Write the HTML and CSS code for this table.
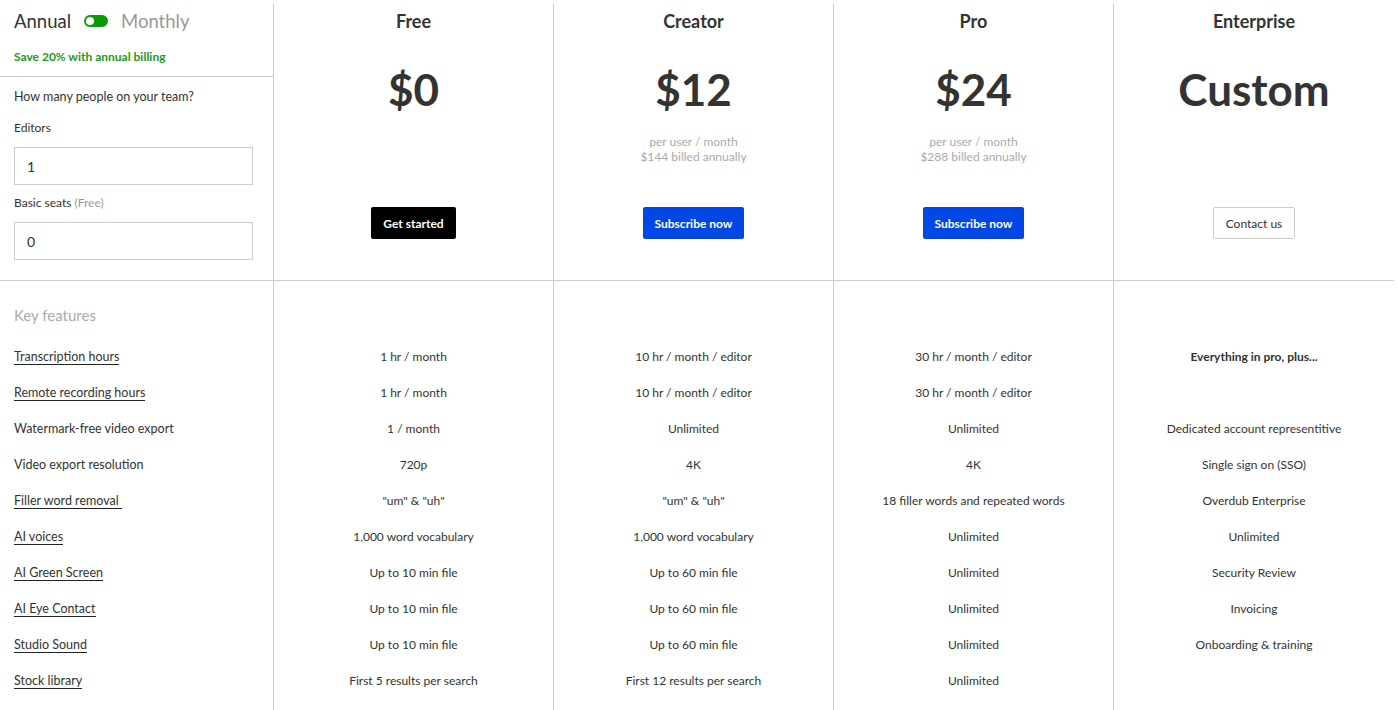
FILE: index.html
```html
<!DOCTYPE html>
<html lang="en">
<head>
<meta charset="utf-8">
<title>Pricing</title>
<link rel="stylesheet" href="styles.css">
</head>
<body>
<div class="pricing">
  <div class="cell head side">
    <div class="billing">
      <div class="toggle-row">
        <span class="opt on">Annual</span>
        <span class="switch"><span class="knob"></span></span>
        <span class="opt off">Monthly</span>
      </div>
      <div class="save">Save 20% with annual billing</div>
    </div>
    <div class="team">
      <div class="q">How many people on your team?</div>
      <label class="lbl lbl-editors">Editors</label>
      <input class="field" type="text" value="1">
      <label class="lbl lbl-basic">Basic seats <span class="muted">(Free)</span></label>
      <input class="field" type="text" value="0">
    </div>
  </div>
  <div class="cell head plan">
    <div class="plan-name">Free</div>
    <div class="price">$0</div>
    <div class="sub"></div>
    <a class="btn btn-dark">Get started</a>
  </div>
  <div class="cell head plan">
    <div class="plan-name">Creator</div>
    <div class="price">$12</div>
    <div class="sub">per user / month<br>$144 billed annually</div>
    <a class="btn btn-blue">Subscribe now</a>
  </div>
  <div class="cell head plan">
    <div class="plan-name">Pro</div>
    <div class="price">$24</div>
    <div class="sub">per user / month<br>$288 billed annually</div>
    <a class="btn btn-blue">Subscribe now</a>
  </div>
  <div class="cell head plan">
    <div class="plan-name">Enterprise</div>
    <div class="price">Custom</div>
    <div class="sub"></div>
    <a class="btn btn-light">Contact us</a>
  </div>

  <div class="cell key side">Key features</div>
  <div class="cell key"></div>
  <div class="cell key"></div>
  <div class="cell key"></div>
  <div class="cell key"></div>

  <div class="cell feat side"><span class="ul">Transcription hours</span></div>
  <div class="cell feat">1 hr / month</div>
  <div class="cell feat">10 hr / month / editor</div>
  <div class="cell feat">30 hr / month / editor</div>
  <div class="cell feat strong">Everything in pro, plus...</div>

  <div class="cell feat side"><span class="ul">Remote recording hours</span></div>
  <div class="cell feat">1 hr / month</div>
  <div class="cell feat">10 hr / month / editor</div>
  <div class="cell feat">30 hr / month / editor</div>
  <div class="cell feat"></div>

  <div class="cell feat side">Watermark-free video export</div>
  <div class="cell feat">1 / month</div>
  <div class="cell feat">Unlimited</div>
  <div class="cell feat">Unlimited</div>
  <div class="cell feat">Dedicated account representitive</div>

  <div class="cell feat side">Video export resolution</div>
  <div class="cell feat">720p</div>
  <div class="cell feat">4K</div>
  <div class="cell feat">4K</div>
  <div class="cell feat">Single sign on (SSO)</div>

  <div class="cell feat side"><span class="ul">Filler word removal&nbsp;</span></div>
  <div class="cell feat">"um" &amp; "uh"</div>
  <div class="cell feat">"um" &amp; "uh"</div>
  <div class="cell feat">18 filler words and repeated words</div>
  <div class="cell feat">Overdub Enterprise</div>

  <div class="cell feat side"><span class="ul">AI voices</span></div>
  <div class="cell feat">1,000 word vocabulary</div>
  <div class="cell feat">1,000 word vocabulary</div>
  <div class="cell feat">Unlimited</div>
  <div class="cell feat">Unlimited</div>

  <div class="cell feat side"><span class="ul">AI Green Screen</span></div>
  <div class="cell feat">Up to 10 min file</div>
  <div class="cell feat">Up to 60 min file</div>
  <div class="cell feat">Unlimited</div>
  <div class="cell feat">Security Review</div>

  <div class="cell feat side"><span class="ul">AI Eye Contact</span></div>
  <div class="cell feat">Up to 10 min file</div>
  <div class="cell feat">Up to 60 min file</div>
  <div class="cell feat">Unlimited</div>
  <div class="cell feat">Invoicing</div>

  <div class="cell feat side"><span class="ul">Studio Sound</span></div>
  <div class="cell feat">Up to 10 min file</div>
  <div class="cell feat">Up to 60 min file</div>
  <div class="cell feat">Unlimited</div>
  <div class="cell feat">Onboarding &amp; training</div>

  <div class="cell feat side"><span class="ul">Stock library</span></div>
  <div class="cell feat">First 5 results per search</div>
  <div class="cell feat">First 12 results per search</div>
  <div class="cell feat">Unlimited</div>
  <div class="cell feat"></div>

  <div class="cell end"></div>
  <div class="cell end"></div>
  <div class="cell end"></div>
  <div class="cell end"></div>
  <div class="cell end"></div>
</div>
</body>
</html>
```
FILE: styles.css
```css
* { box-sizing: border-box; }

html, body {
  margin: 0;
  padding: 0;
  background: #fff;
}

body {
  font-family: Lato, "Open Sans", sans-serif;
  color: #333;
  padding-top: 4px;
}

.pricing {
  width: 1394px;
  display: grid;
  grid-template-columns: 274px repeat(4, 280px);
}

.cell {
  border-right: 1px solid #ccc;
}
.cell:nth-child(5n) {
  border-right: none;
}

/* header row */
.head {
  height: 277px;
  border-bottom: 1px solid #ccc;
}

.billing {
  height: 73px;
  border-bottom: 1px solid #ccc;
  padding: 0 14px;
}

.toggle-row {
  height: 34px;
  display: flex;
  align-items: center;
  font-size: 18.5px;
}
.opt.on { color: #333; }
.opt.off { color: #999; }

.switch {
  width: 24px;
  height: 12px;
  border-radius: 6px;
  background: #0a9a0a;
  margin: 0 13px 0 13px;
  display: flex;
  align-items: center;
  padding-left: 2px;
}
.knob {
  width: 8px;
  height: 8px;
  border-radius: 50%;
  background: #fff;
}

.save {
  margin-top: 11px;
  font-size: 12px;
  line-height: 16px;
  color: #1c9a1c;
  font-weight: 700;
}

.team {
  padding: 12px 14px 0;
}
.q, .lbl {
  display: block;
  font-size: 12px;
  line-height: 16px;
  color: #333;
}
.q {
  font-size: 12.5px;
}
.lbl-editors { margin-top: 15px; }
.lbl-basic { margin-top: 10px; }
.muted { color: #999; }

.field {
  display: block;
  width: 239px;
  height: 38px;
  margin-top: 11px;
  border: 1px solid #ccc;
  border-radius: 0;
  padding: 0 12px;
  font-family: inherit;
  font-size: 14px;
  color: #333;
  background: #fff;
  outline: none;
}

.plan {
  display: flex;
  flex-direction: column;
  align-items: center;
  padding-top: 5px;
}
.plan-name {
  font-size: 18px;
  line-height: 24px;
  font-weight: 700;
  color: #333;
}
.price {
  margin-top: 28px;
  font-size: 44px;
  line-height: 56px;
  font-weight: 700;
  color: #333;
}
.sub {
  margin-top: 17px;
  height: 30px;
  font-size: 12px;
  line-height: 15px;
  color: #aaa;
  text-align: center;
}
.btn {
  margin-top: 43px;
  height: 32px;
  padding: 0 12px;
  display: inline-flex;
  align-items: center;
  justify-content: center;
  font-size: 12px;
  border-radius: 2px;
  cursor: pointer;
}
.btn-dark {
  background: #000;
  color: #fff;
  font-weight: 700;
}
.btn-blue {
  background: #0047e6;
  color: #fff;
  font-weight: 700;
}
.btn-light {
  background: #fff;
  color: #333;
  border: 1px solid #ccc;
}

/* features */
.key {
  height: 58px;
  padding-top: 16px;
}
.key.side {
  font-size: 15px;
  line-height: 36px;
  color: #aaa;
  padding-left: 14px;
}

.feat {
  height: 36px;
  line-height: 36px;
  font-size: 12px;
  color: #333;
  text-align: center;
  white-space: nowrap;
}
.feat.side {
  text-align: left;
  padding-left: 14px;
  font-size: 12.5px;
}
.feat.strong {
  font-weight: 700;
}
.ul {
  border-bottom: 1px solid #222;
}

.end {
  height: 11px;
}
```
